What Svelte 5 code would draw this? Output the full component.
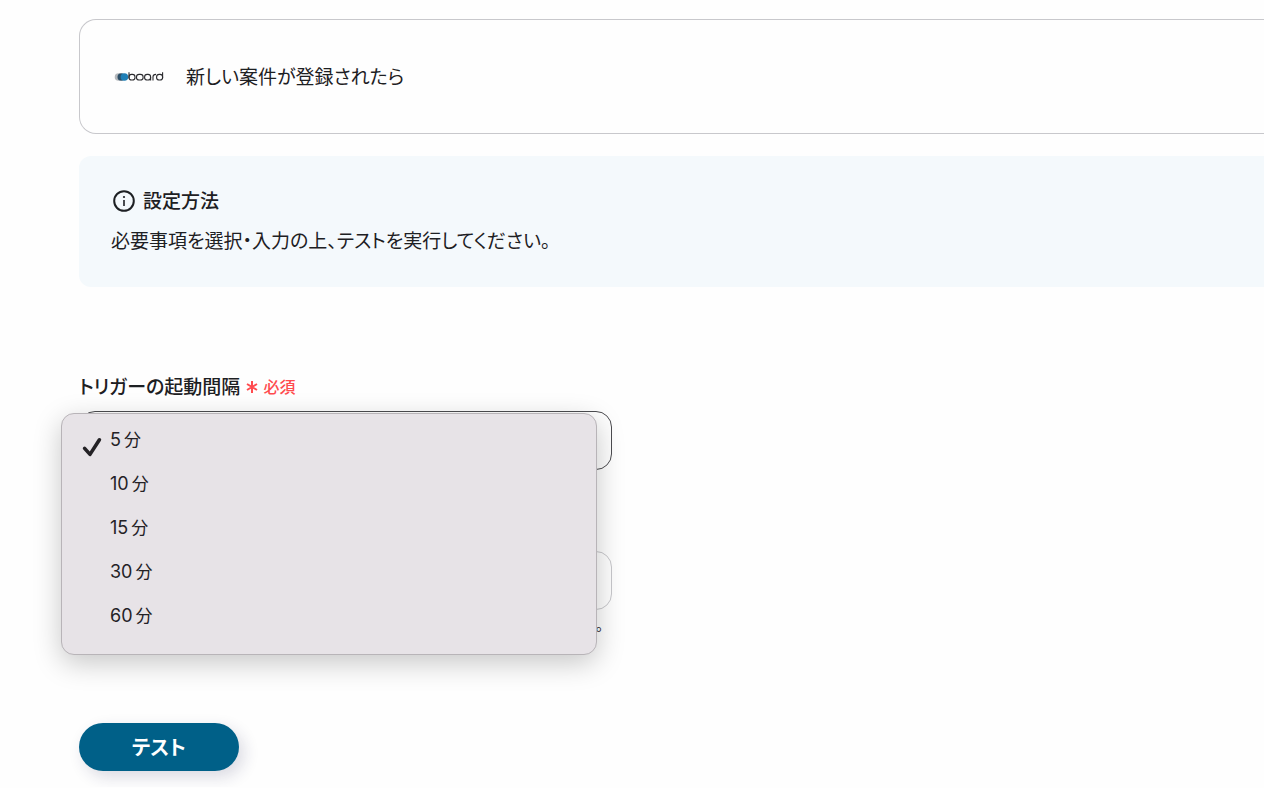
<script>
    const intervals = [5, 10, 15, 30, 60];

    let interval = $state(5);
    let menuOpen = $state(true);
    let target = $state('');

    function openMenu(e) {
        // Use our own menu instead of the native popup
        e.preventDefault();
        menuOpen = !menuOpen;
    }

    function choose(value) {
        interval = value;
        menuOpen = false;
    }
</script>

<main class="page">
    <section class="app-card">
        <svg class="logo" viewBox="0 0 50 12" role="img" aria-label="board">
            <circle cx="4.5" cy="7" r="3.8" fill="#b4b8bc" />
            <circle cx="7.3" cy="7" r="3.8" fill="#2c4f68" />
            <circle cx="10.4" cy="7" r="3.8" fill="#1f7fb6" />
            <g fill="none" stroke="#2a2a2e" stroke-width="1.1">
                <path d="M15 2.2v6" />
                <rect x="15" y="4.4" width="6" height="5.6" rx="2.6" />
                <rect x="22.5" y="4.4" width="6.6" height="5.6" rx="2.6" />
                <rect x="30.6" y="4.4" width="6" height="5.6" rx="2.6" />
                <path d="M36.6 7v3.4M39 10.4V6.8q0-2.4 3-2.4" />
                <rect x="42.6" y="4.4" width="6" height="5.6" rx="2.6" />
                <path d="M48.6 2.2v6" />
            </g>
        </svg>
        <span class="app-title">新しい案件が登録されたら</span>
    </section>

    <section class="guide">
        <h2>
            <svg class="info" viewBox="0 0 24 24" aria-hidden="true">
                <circle cx="12" cy="13" r="9.8" fill="none" stroke="currentColor" stroke-width="2" />
                <circle cx="12" cy="9" r="1.1" fill="currentColor" />
                <path d="M12 12v6" stroke="currentColor" stroke-width="1.6" />
            </svg>
            設定方法
        </h2>
        <p>必要事項を選択・入力の上、テストを実行してください。</p>
    </section>

    <form class="form" onsubmit={(e) => e.preventDefault()}>
        <div class="label-row">
            <label for="interval">トリガーの起動間隔</label>
            <span class="required">
                <svg class="asterisk" viewBox="0 0 12 14" aria-hidden="true">
                    <path d="M6 2v12M1 5l10 6M11 5L1 11" stroke="currentColor" stroke-width="2" />
                </svg>
                必須
            </span>
        </div>
        <div class="field">
            <select id="interval" class="control" bind:value={interval} onmousedown={openMenu}>
                {#each intervals as value (value)}
                    <option {value}>{value}分</option>
                {/each}
            </select>

            {#if menuOpen}
                <div class="menu" role="listbox" aria-label="トリガーの起動間隔">
                    {#each intervals as value (value)}
                        <button
                            type="button"
                            class="item"
                            role="option"
                            aria-selected={value === interval}
                            onclick={() => choose(value)}
                        >
                            <span class="mark">
                                {#if value === interval}
                                    <svg class="check" viewBox="0 0 20 20" aria-hidden="true">
                                        <path
                                            d="M2.6 11.4L8 17.4L17.4 2.8"
                                            fill="none"
                                            stroke="currentColor"
                                            stroke-width="3.6"
                                            stroke-linecap="round"
                                            stroke-linejoin="round"
                                        />
                                    </svg>
                                {/if}
                            </span>
                            <span>{value}<span class="unit">分</span></span>
                        </button>
                    {/each}
                </div>
            {/if}
        </div>

        <input
            class="control light"
            type="text"
            aria-labelledby="target-hint"
            bind:value={target}
        />
        <p id="target-hint" class="hint">。</p>

        <button class="submit" type="submit">テスト</button>
    </form>
</main>

<style>
    :global(body) {
        margin: 0;
        background: #fefefe;
    }

    .page {
        padding: 19px 0 16px 79px;
        color: #1d2023;
        font-family: 'Noto Sans CJK JP', sans-serif;
        font-size: 19px;
        line-height: 28px;
        font-feature-settings: 'palt';
    }

    .app-card {
        display: flex;
        align-items: center;
        gap: 22px;
        padding: 42px 34px 43px;
        border: 1px solid #c8c8cc;
        border-right: 0;
        border-radius: 17px 0 0 17px;
    }

    .logo {
        width: 50px;
        height: 12px;
    }

    .guide {
        margin-top: 22px;
        padding: 30px 32px 33px;
        background: #f4f9fc;
        border-radius: 12px 0 0 12px;
    }

    h2 {
        display: flex;
        align-items: center;
        gap: 6px;
        margin: 0 0 12px;
        font-size: 19px;
        font-weight: 500;
    }

    .info {
        width: 26px;
        height: 24px;
    }

    p {
        margin: 0;
    }

    .form {
        max-width: 533px;
        margin-top: 85px;
    }

    .label-row {
        display: flex;
        align-items: center;
        gap: 6px;
        margin-bottom: 11px;
        font-weight: 500;
    }

    .required {
        display: flex;
        align-items: center;
        gap: 5px;
        color: #ff4b4f;
        font-size: 16px;
    }

    .asterisk {
        width: 12px;
        height: 14px;
    }

    .field {
        position: relative;
        margin-bottom: 81px;
    }

    .control {
        display: block;
        box-sizing: border-box;
        width: 100%;
        height: 59px;
        padding: 0 20px;
        border: 1px solid #4c4c50;
        border-radius: 16px;
        background: #fefefe;
        color: inherit;
        font: inherit;
        appearance: none;
    }

    .light {
        border-color: #c8c8cc;
    }

    .menu {
        position: absolute;
        z-index: 1;
        top: 2px;
        left: -18px;
        box-sizing: border-box;
        width: 536px;
        padding: 4px 0 16px;
        border: 1px solid #b8b4b8;
        border-radius: 13px;
        background: #e7e3e7;
        box-shadow: 0 8px 28px rgba(0, 0, 0, 0.22);
    }

    .item {
        display: flex;
        align-items: center;
        width: 100%;
        height: 44px;
        padding: 0 20px;
        border: 0;
        background: none;
        color: #242226;
        font-family: Inter, 'Noto Sans CJK JP', sans-serif;
        font-size: 18px;
        line-height: 24px;
        text-align: left;
    }

    .mark {
        display: flex;
        align-items: flex-end;
        width: 28px;
        height: 34px;
    }

    .check {
        width: 20px;
        height: 20px;
    }

    .unit {
        margin-left: 3px;
        font-size: 17px;
    }

    .hint {
        margin-top: 0;
        padding-right: 9px;
        font-size: 15px;
        text-align: right;
    }

    .submit {
        display: block;
        width: 160px;
        height: 48px;
        margin-top: 85px;
        border: 0;
        border-radius: 24px;
        background: #006088;
        box-shadow: 5px 6px 16px rgba(30, 30, 80, 0.16);
        color: #fff;
        font: inherit;
        font-size: 20px;
        font-weight: 700;
    }
</style>
